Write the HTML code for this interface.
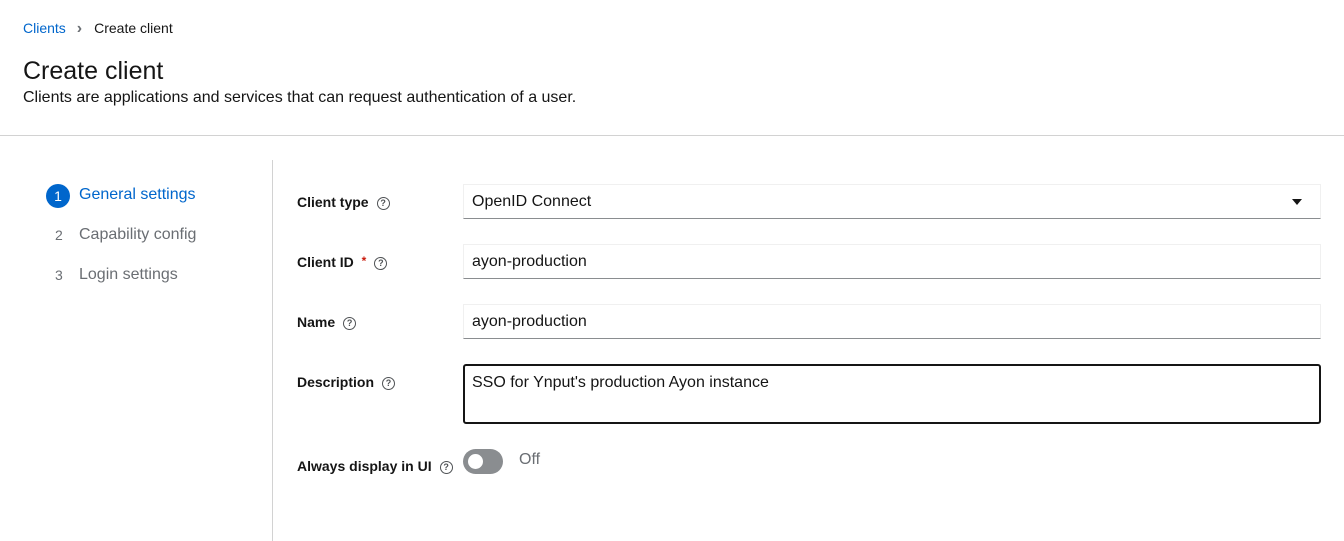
<!DOCTYPE html>
<html><head><style>
*{box-sizing:border-box;margin:0;padding:0}
body{width:1344px;height:541px;background:#fff;font-family:"Liberation Sans",sans-serif;color:#151515;position:relative;overflow:hidden}
.a{position:absolute;white-space:nowrap}
.lbl{font-weight:bold;font-size:14px;color:#151515}
.q{display:inline-block;width:13px;height:13px;border:1.3px solid #4f5255;border-radius:50%;font-size:9px;line-height:11px;text-align:center;font-weight:bold;color:#4f5255;vertical-align:1px;margin-left:8px}
.inp{position:absolute;left:463px;width:858px;height:35px;border:1px solid #f0f0f0;border-bottom:1px solid #8a8d90;font-size:16px;padding:0 8px;line-height:34px;color:#151515}
</style></head><body>
<div class="a" style="left:23px;top:20px;font-size:14px"><span style="color:#0066cc">Clients</span><span style="color:#6a6e73;margin:0 12px 0 11px;font-size:16px;font-weight:bold;line-height:14px">&#x203A;</span>Create client</div>
<div class="a" style="left:23px;top:57px;font-size:25px">Create client</div>
<div class="a" style="left:23px;top:89px;font-size:16px">Clients are applications and services that can request authentication of a user.</div>
<div class="a" style="left:0;top:135px;width:1344px;height:1px;background:#d2d2d2"></div>
<div class="a" style="left:272px;top:160px;width:1px;height:381px;background:#d2d2d2"></div>
<div class="a" style="left:46px;top:184px;width:24px;height:24px;border-radius:50%;background:#0066cc;color:#fff;font-size:14px;text-align:center;line-height:24px">1</div>
<div class="a" style="left:79px;top:186px;font-size:16px;color:#0066cc">General settings</div>
<div class="a" style="left:55px;top:227px;font-size:14px;color:#6a6e73">2</div>
<div class="a" style="left:79px;top:226px;font-size:16px;color:#6a6e73">Capability config</div>
<div class="a" style="left:55px;top:267px;font-size:14px;color:#6a6e73">3</div>
<div class="a" style="left:79px;top:266px;font-size:16px;color:#6a6e73">Login settings</div>

<div class="a lbl" style="left:297px;top:194px">Client type<span class="q">?</span></div>
<div class="inp" style="top:184px">OpenID Connect<span style="position:absolute;right:18px;top:14px;width:0;height:0;border-left:5px solid transparent;border-right:5px solid transparent;border-top:6px solid #151515"></span></div>
<div class="a lbl" style="left:297px;top:254px">Client ID <span style="color:#c9190b;margin-left:4px;font-size:12px;vertical-align:2px">*</span><span class="q">?</span></div>
<div class="inp" style="top:244px">ayon-production</div>
<div class="a lbl" style="left:297px;top:314px">Name<span class="q">?</span></div>
<div class="inp" style="top:304px">ayon-production</div>
<div class="a lbl" style="left:297px;top:374px">Description<span class="q">?</span></div>
<div class="inp" style="top:364px;height:60px;border:2px solid #151515;border-radius:3px;line-height:20px;padding-top:7px;padding-left:7px">SSO for Ynput's production Ayon instance</div>
<div class="a lbl" style="left:297px;top:458px">Always display in UI<span class="q">?</span></div>
<div class="a" style="left:463px;top:449px;width:40px;height:25px;border-radius:13px;background:#8a8d90"><div style="position:absolute;left:5px;top:5px;width:15px;height:15px;border-radius:50%;background:#fff"></div></div>
<div class="a" style="left:519px;top:451px;font-size:16px;color:#6a6e73">Off</div>
</body></html>
